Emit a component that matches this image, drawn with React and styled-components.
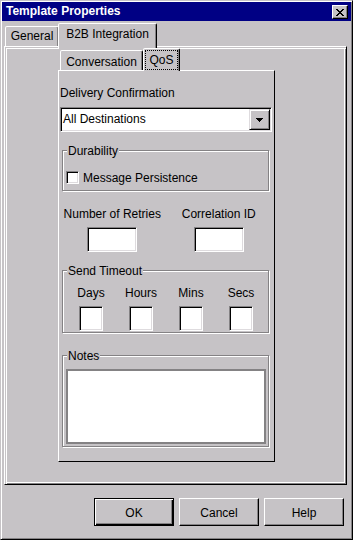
import styled, { createGlobalStyle, css } from 'styled-components'

const colors = {
  face: '#c6c3c6',
  light: '#ffffff',
  soft: '#dedbde',
  shadow: '#848284',
  dark: '#000000',
  title: '#000084',
}

const GlobalStyle = createGlobalStyle`
  * { box-sizing: border-box; }
  html, body { margin: 0; padding: 0; background: ${colors.face}; }
  body {
    font-family: "Liberation Sans", Arial, sans-serif;
    font-size: 12px;
    line-height: 14px;
    color: #000;
  }
`

const sunken = css`
  background: ${colors.light};
  border: 1px solid;
  border-color: ${colors.shadow} ${colors.light} ${colors.light} ${colors.shadow};
  box-shadow: inset 1px 1px 0 ${colors.dark}, inset -1px -1px 0 ${colors.soft};
`

const Window = styled.div`
  width: 353px;
  height: 540px;
  display: flex;
  flex-direction: column;
  padding: 1px;
  background: ${colors.face};
  border: 1px solid;
  border-color: ${colors.face} ${colors.dark} ${colors.dark} ${colors.face};
  box-shadow: inset 1px 1px 0 ${colors.light}, inset -1px -1px 0 ${colors.shadow};
`

const TitleBar = styled.div`
  flex: none;
  height: 19px;
  display: flex;
  align-items: center;
  justify-content: space-between;
  padding: 0 3px 0 4px;
  background: ${colors.title};
  color: ${colors.light};
  font-weight: bold;
  line-height: 19px;
`

const CloseButton = styled.div`
  width: 16px;
  height: 14px;
  display: flex;
  align-items: center;
  justify-content: center;
  padding-top: 1px;
  background: ${colors.face};
  border: 1px solid;
  border-color: ${colors.light} ${colors.dark} ${colors.dark} ${colors.light};
  box-shadow: inset -1px -1px 0 ${colors.shadow};
`

const TabArea = styled.div`
  flex: none;
  padding: 2px 4px 0 2px;
`

const TabStrip = styled.div`
  display: flex;
  align-items: flex-end;
  height: ${p => p.$h}px;
  padding-left: ${p => p.$indent}px;
`

const Tab = styled.div`
  position: relative;
  z-index: ${p => (p.$active ? 2 : 1)};
  width: ${p => p.$w}px;
  height: ${p => p.$h}px;
  margin-left: ${p => p.$ml || 0}px;
  margin-bottom: ${p => (p.$active ? -p.$overlap : 0)}px;
  padding: ${p => p.$pt}px 1px 0;
  text-align: center;
  white-space: nowrap;
  background: ${colors.face};
  border: 1px solid;
  border-bottom: none;
  border-color: ${colors.light} ${colors.dark} transparent ${colors.light};
  border-radius: 2px 2px 0 0;
  box-shadow: inset -1px 0 0 ${colors.shadow};
`

const Focus = styled.span`
  display: block;
  border: 1px dotted ${colors.dark};
  padding: 0 3px;
  line-height: 18px;
`

const Panel = styled.div`
  height: 439px;
  padding: 1px 0 0 53px;
  border: 1px solid;
  border-color: ${colors.light} ${colors.dark} ${colors.dark} ${colors.light};
  box-shadow:
    inset 1px 1px 0 ${colors.face},
    inset 2px 2px 0 ${colors.light},
    inset -1px -1px 0 ${colors.shadow},
    inset -2px -2px 0 ${colors.light};
`

const InnerTabs = styled.div`
  width: 217px;
`

const Page = styled.div`
  height: 392px;
  display: flex;
  flex-direction: column;
  align-items: flex-start;
  border: 1px solid;
  border-color: ${colors.light} ${colors.dark} ${colors.dark} ${colors.light};
`

const Caption = styled.div`
  margin: ${p => p.$mt}px 0 0 1px;
`

const Select = styled.div`
  ${sunken}
  width: 212px;
  height: 25px;
  margin: 7px 0 0 1px;
  padding: 1px 1px 1px 2px;
  display: flex;
  align-items: center;
  justify-content: space-between;
  line-height: 21px;
`

const DropButton = styled.div`
  width: 21px;
  height: 21px;
  display: flex;
  align-items: center;
  justify-content: center;
  background: ${colors.face};
  border: 1px solid;
  border-color: ${colors.soft} ${colors.dark} ${colors.dark} ${colors.soft};
  box-shadow: inset 1px 1px 0 ${colors.light}, inset -1px -1px 0 ${colors.shadow};
`

const Group = styled.div`
  position: relative;
  width: 207px;
  margin: ${p => p.$mt}px 0 0 3px;
  padding: ${p => p.$pad};
  border: 1px solid ${colors.shadow};
  box-shadow: inset 1px 1px 0 ${colors.light}, 1px 1px 0 ${colors.light};
`

const Legend = styled.span`
  position: absolute;
  top: -7px;
  left: 4px;
  padding: 0 1px;
  background: ${colors.face};
`

const CheckRow = styled.div`
  display: flex;
  align-items: center;
  gap: 4px;
  height: 13px;
`

const CheckBox = styled.span`
  ${sunken}
  width: 13px;
  height: 13px;
`

const FieldGrid = styled.div`
  display: grid;
  grid-template-columns: repeat(${p => p.$cols}, ${p => p.$colw}px);
  row-gap: 6px;
  justify-items: center;
  margin-top: ${p => p.$mt || 0}px;
`

const TextBox = styled.div`
  ${sunken}
  width: ${p => p.$w}px;
  height: 25px;
`

const NotesArea = styled.div`
  width: 200px;
  height: 75px;
  background: ${colors.light};
  border: 2px solid ${colors.shadow};
`

const ButtonRow = styled.div`
  flex: none;
  display: flex;
  justify-content: flex-end;
  gap: 5px;
  padding: 13px 7px 12px 0;
`

const PushButton = styled.div`
  width: 80px;
  height: 28px;
  display: flex;
  align-items: center;
  justify-content: center;
  padding-top: 1px;
  background: ${colors.face};
  border: 1px solid;
  ${p =>
    p.$default
      ? css`
          border-color: ${colors.dark};
          box-shadow: inset 1px 1px 0 ${colors.light}, inset -1px -1px 0 ${colors.dark},
            inset -2px -2px 0 ${colors.shadow};
        `
      : css`
          border-color: ${colors.light} ${colors.dark} ${colors.dark} ${colors.light};
          box-shadow: inset -1px -1px 0 ${colors.shadow};
        `}
`

const CloseGlyph = () => (
  <svg width="8" height="7" viewBox="0 0 8 7" shapeRendering="crispEdges">
    <path
      fill="#000"
      d="M0 0h2v1H0zM6 0h2v1H6zM1 1h2v1H1zM5 1h2v1H5zM2 2h4v1H2zM3 3h2v1H3zM2 4h4v1H2zM1 5h2v1H1zM5 5h2v1H5zM0 6h2v1H0zM6 6h2v1H6z"
    />
  </svg>
)

const ArrowGlyph = () => (
  <svg width="7" height="4" viewBox="0 0 7 4" shapeRendering="crispEdges">
    <path fill="#000" d="M0 0h7v1H0zM1 1h5v1H1zM2 2h3v1H2zM3 3h1v1H3z" />
  </svg>
)

const timeouts = ['Days', 'Hours', 'Mins', 'Secs']

const App = () => {
  return (
    <Window>
      <GlobalStyle />
      <TitleBar>
        <span>Template Properties</span>
        <CloseButton>
          <CloseGlyph />
        </CloseButton>
      </TitleBar>

      <TabArea>
        <TabStrip $h={23} $indent={1}>
          <Tab $w={54} $h={20} $pt={2}>General</Tab>
          <Tab $active $w={99} $h={26} $pt={3} $ml={-1} $overlap={3}>B2B Integration</Tab>
        </TabStrip>

        <Panel>
          <InnerTabs>
            <TabStrip $h={22} $indent={2}>
              <Tab $w={83} $h={20} $pt={4}>Conversation</Tab>
              <Tab $active $w={37} $h={23} $pt={1} $overlap={1}>
                <Focus>QoS</Focus>
              </Tab>
            </TabStrip>

            <Page>
              <Caption $mt={15}>Delivery Confirmation</Caption>
              <Select>
                <span>All Destinations</span>
                <DropButton>
                  <ArrowGlyph />
                </DropButton>
              </Select>

              <Group $mt={18} $pad="20px 0 6px 3px">
                <Legend>Durability</Legend>
                <CheckRow>
                  <CheckBox />
                  <span>Message Persistence</span>
                </CheckRow>
              </Group>

              <FieldGrid $cols={2} $colw={106.5} $mt={16}>
                <span>Number of Retries</span>
                <span>Correlation ID</span>
                <TextBox $w={50} />
                <TextBox $w={50} />
              </FieldGrid>

              <Group $mt={18} $pad="15px 0 1px 3px">
                <Legend>Send Timeout</Legend>
                <FieldGrid $cols={4} $colw={50}>
                  {timeouts.map(t => (
                    <span key={t}>{t}</span>
                  ))}
                  {timeouts.map(t => (
                    <TextBox key={t} $w={24} />
                  ))}
                </FieldGrid>
              </Group>

              <Group $mt={22} $pad="13px 2px 2px 3px">
                <Legend>Notes</Legend>
                <NotesArea />
              </Group>
            </Page>
          </InnerTabs>
        </Panel>
      </TabArea>

      <ButtonRow>
        <PushButton $default>OK</PushButton>
        <PushButton>Cancel</PushButton>
        <PushButton>Help</PushButton>
      </ButtonRow>
    </Window>
  )
}

export default App
